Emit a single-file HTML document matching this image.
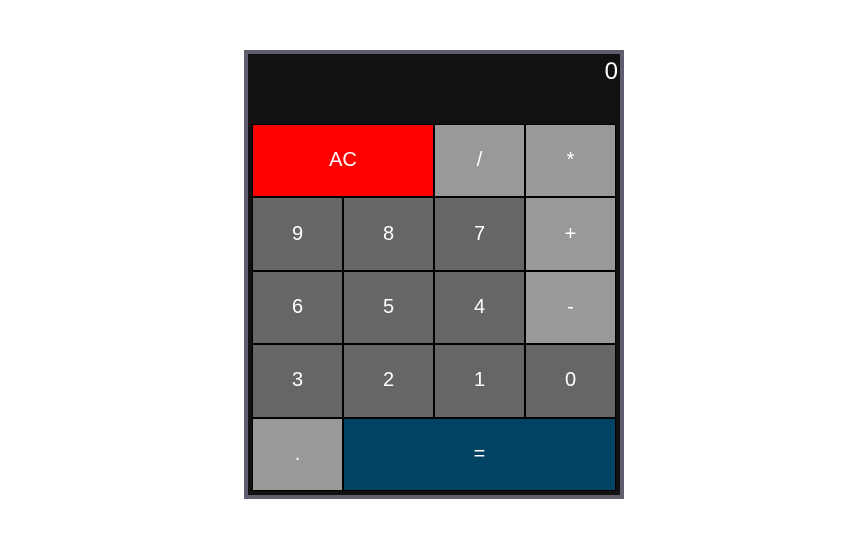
<!DOCTYPE html>
<html><head><style>
html,body{margin:0;padding:0;background:#fff;width:850px;height:547px;overflow:hidden;font-family:"Liberation Sans",Arial,sans-serif;}
.calc{position:absolute;left:244px;top:50px;width:372px;height:441px;border:4px solid #5f5d6e;background:#111;}
.disp{position:absolute;right:2px;top:4px;color:#fff;font-size:24px;}
.grid{position:absolute;left:4px;top:70px;width:364px;height:367px;display:grid;grid-template-columns:repeat(4,91px);grid-template-rows:repeat(5,1fr);}
.b{border:1px solid #000;box-sizing:border-box;display:flex;align-items:center;justify-content:center;color:#fff;font-size:20px;background:#666;}
.op{background:#999;}
.ac{background:#f00;grid-column:span 2;}
.eq{background:#024262;grid-column:span 3;}
</style></head><body>
<div class="calc">
<div class="disp">0</div>
<div class="grid">
<div class="b ac">AC</div><div class="b op">/</div><div class="b op">*</div>
<div class="b">9</div><div class="b">8</div><div class="b">7</div><div class="b op">+</div>
<div class="b">6</div><div class="b">5</div><div class="b">4</div><div class="b op">-</div>
<div class="b">3</div><div class="b">2</div><div class="b">1</div><div class="b">0</div>
<div class="b op">.</div><div class="b eq">=</div>
</div>
</div>
</body></html>
